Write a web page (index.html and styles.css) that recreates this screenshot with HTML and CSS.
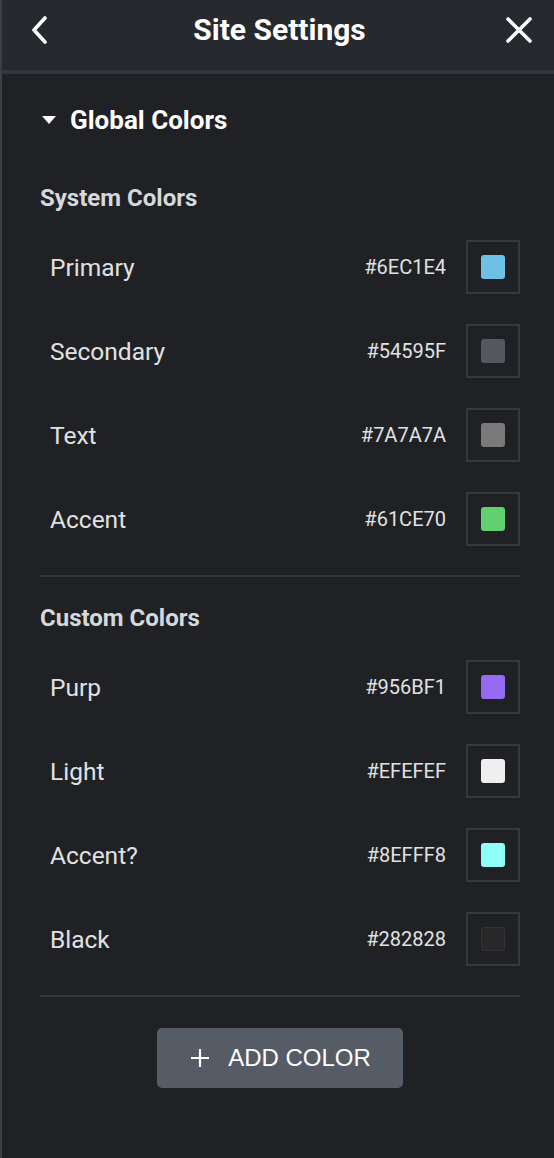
FILE: index.html
```html
<!DOCTYPE html>
<html>
<head>
<meta charset="utf-8">
<link rel="stylesheet" href="styles.css">
</head>
<body>
<div class="panel">
  <header class="header">
    <svg class="icon" width="20" height="28" viewBox="0 0 20 28"><path d="M15 2 L4 14 L15 26" fill="none" stroke="#fff" stroke-width="3.6" stroke-linecap="round" stroke-linejoin="round"/></svg>
    <h1 class="title">Site Settings</h1>
    <svg class="icon" width="28" height="28" viewBox="0 0 28 28"><path d="M3 3 L25 25 M25 3 L3 25" fill="none" stroke="#fff" stroke-width="3.6" stroke-linecap="round"/></svg>
  </header>
  <main class="content">
    <div class="group-title">
      <svg width="14" height="8" viewBox="0 0 14 8"><path d="M0 0 H14 L7 8 Z" fill="#fff"/></svg>
      <span>Global Colors</span>
    </div>

    <h2 class="section-title first">System Colors</h2>
    <div class="rows">
      <div class="row"><span class="label">Primary</span><span class="hex">#6EC1E4</span><span class="box"><span class="swatch" style="background:#6EC1E4"></span></span></div>
      <div class="row"><span class="label">Secondary</span><span class="hex">#54595F</span><span class="box"><span class="swatch" style="background:#54595F"></span></span></div>
      <div class="row"><span class="label">Text</span><span class="hex">#7A7A7A</span><span class="box"><span class="swatch" style="background:#7A7A7A"></span></span></div>
      <div class="row"><span class="label">Accent</span><span class="hex">#61CE70</span><span class="box"><span class="swatch" style="background:#61CE70"></span></span></div>
    </div>
    <hr class="divider">

    <h2 class="section-title">Custom Colors</h2>
    <div class="rows">
      <div class="row"><span class="label">Purp</span><span class="hex">#956BF1</span><span class="box"><span class="swatch" style="background:#956BF1"></span></span></div>
      <div class="row"><span class="label">Light</span><span class="hex">#EFEFEF</span><span class="box"><span class="swatch" style="background:#EFEFEF"></span></span></div>
      <div class="row"><span class="label">Accent?</span><span class="hex">#8EFFF8</span><span class="box"><span class="swatch" style="background:#8EFFF8"></span></span></div>
      <div class="row"><span class="label">Black</span><span class="hex">#282828</span><span class="box"><span class="swatch dark" style="background:#282828"></span></span></div>
    </div>
    <hr class="divider">

    <div class="actions">
      <button class="add-btn">
        <svg width="18" height="18" viewBox="0 0 18 18"><path d="M9 0 V18 M0 9 H18" stroke="#fff" stroke-width="2.2"/></svg>
        <span>ADD COLOR</span>
      </button>
    </div>
  </main>
</div>
</body>
</html>
```

FILE: styles.css
```css
* { box-sizing: border-box; }
html, body {
  margin: 0;
  padding: 0;
  background: #202124;
}
body {
  font-family: Roboto, "Noto Sans", sans-serif;
  color: #e0e1e3;
}
.panel {
  min-height: 1158px;
  border-left: 2px solid #3c3f44;
  background: #202124;
}
.header {
  height: 74px;
  background: #26292d;
  border-bottom: 4px solid #33363b;
  display: flex;
  align-items: center;
  justify-content: space-between;
  padding: 0 21px 10px 28px;
}
.icon { display: block; }
.title {
  margin: 0 0 0 4px;
  font-size: 30px;
  font-weight: 700;
  color: #fff;
  line-height: 36px;
}
.content {
  padding: 31px 34px 0 38px;
}
.group-title {
  display: flex;
  align-items: center;
  gap: 14px;
  height: 30px;
  padding-left: 2px;
  font-size: 26px;
  font-weight: 700;
  color: #fff;
}
.section-title {
  margin: 27px 0 0;
  height: 28px;
  line-height: 28px;
  font-size: 24px;
  font-weight: 700;
  color: #d5d8dc;
}
.section-title.first { margin-top: 49px; }
.rows {
  display: flex;
  flex-direction: column;
  gap: 30px;
  margin-top: 28px;
}
.row {
  display: flex;
  align-items: center;
  height: 54px;
  padding-left: 10px;
}
.label {
  flex: 1;
  font-size: 24.5px;
  color: #e0e1e3;
}
.hex {
  font-size: 20px;
  color: #e0e1e3;
  margin-right: 20px;
}
.box {
  width: 54px;
  height: 54px;
  border: 2px solid #35383d;
  display: flex;
  align-items: center;
  justify-content: center;
}
.swatch {
  width: 24px;
  height: 24px;
  border-radius: 3px;
}
.swatch.dark { box-shadow: inset 0 0 0 1px #303236; }
.divider {
  margin: 29px 0 0;
  border: 0;
  height: 2px;
  background: #34363a;
}
.actions {
  display: flex;
  justify-content: center;
  margin-top: 31px;
}
.add-btn {
  width: 246px;
  height: 60px;
  border: 0;
  border-radius: 5px;
  background: #555c65;
  color: #fff;
  font-family: "Liberation Sans", Arial, sans-serif;
  font-size: 24px;
  display: flex;
  align-items: center;
  justify-content: center;
  gap: 19px;
  padding: 0 0 0 2px;
}
.add-btn svg { display: block; }
```
